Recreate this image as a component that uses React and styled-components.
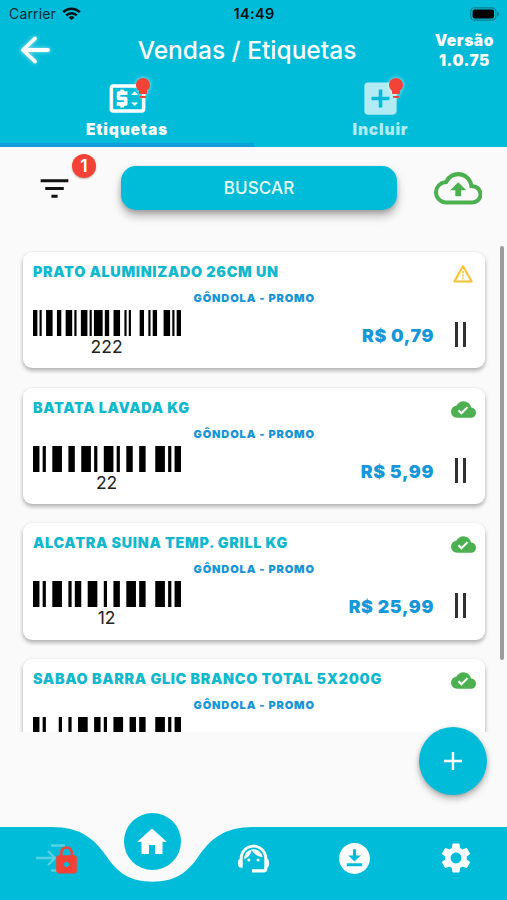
import React from "react";
import styled, { createGlobalStyle } from "styled-components";
import {
  MdOutlinePriceChange,
  MdLightbulb,
  MdAddBox,
  MdFilterList,
  MdOutlineBackup,
  MdCloudDone,
  MdHome,
  MdLock,
  MdSupportAgent,
  MdDownloadForOffline,
  MdSettings,
} from "react-icons/md";

const cyan = "#00bcd9";
const blue = "#1698d8";
const red = "#f44336";
const green = "#4caf50";

const GlobalStyle = createGlobalStyle`
  * { box-sizing: border-box; }
  body { margin: 0; background: #fafafa; font-family: Inter, "Liberation Sans", sans-serif; }
  svg { display: block; flex: none; }
  button { border: 0; padding: 0; background: none; font: inherit; color: inherit; }
`;

const Screen = styled.div`
  width: 507px;
  height: 900px;
  display: flex;
  flex-direction: column;
  position: relative;
  overflow: hidden;
  background: #fafafa;
`;

const Header = styled.header`
  height: 146.5px;
  flex: none;
  background: ${cyan};
  display: flex;
  flex-direction: column;
`;

const StatusBar = styled.div`
  height: 27px;
  padding: 0 7px 0 9px;
  display: grid;
  grid-template-columns: 1fr auto 1fr;
  align-items: center;
  color: #062a33;
  font-size: 14px;
  letter-spacing: 0.15px;
`;

const Carrier = styled.div`
  display: flex;
  align-items: center;
  gap: 6px;
`;

const Clock = styled.div`
  color: #001014;
  font-weight: 600;
  font-size: 14.5px;
  letter-spacing: 0.35px;
  margin-right: 1px;
`;

const BatterySlot = styled.div`
  display: flex;
  justify-content: flex-end;
`;

const TitleBar = styled.div`
  height: 46px;
  display: grid;
  grid-template-columns: 85px 1fr 85px;
  align-items: center;
`;

const BackButton = styled.button`
  padding-left: 18px;
  svg { filter: drop-shadow(0 0 2px rgba(255, 255, 255, 0.6)); }
`;

const Title = styled.h1`
  margin: 0 0 0 -13px;
  text-align: center;
  color: #fff;
  font-size: 24.5px;
  font-weight: 450;
  letter-spacing: 0;
  white-space: nowrap;
`;

const Version = styled.div`
  color: #fff;
  font-size: 15.5px;
  line-height: 19.5px;
  font-weight: 900;
  text-align: center;
  letter-spacing: 0.6px;
  padding-top: 1.5px;
`;

const Tabs = styled.nav`
  flex: 1;
  display: grid;
  grid-template-columns: 254px 253px;
`;

const Tab = styled.button`
  display: flex;
  flex-direction: column;
  align-items: center;
  padding-top: 3px;
  color: ${(p) => (p.$active ? "#fff" : "#b2ebf3")};
  border-bottom: 4px solid ${(p) => (p.$active ? "#0f9fda" : cyan)};
`;

const TabIcon = styled.span`
  position: relative;
  height: 44px;
  display: flex;
  align-items: center;
`;

const TabLabel = styled.span`
  font-size: 15.5px;
  line-height: 19px;
  font-weight: 900;
  letter-spacing: 0.85px;
`;

const Alert = styled.span`
  position: absolute;
  left: ${(p) => p.$x}px;
  top: 0;
  color: ${red};
  filter: drop-shadow(0 0 2px rgba(255, 255, 255, 0.7));
`;

const Toolbar = styled.div`
  height: 99.5px;
  flex: none;
  padding: 19.5px 23px 0 35px;
  display: flex;
  align-items: flex-start;
`;

const FilterButton = styled.button`
  position: relative;
  width: 86px;
  height: 44px;
  display: flex;
  align-items: center;
  padding-left: 1px;
  color: #111;
`;

const Count = styled.span`
  position: absolute;
  left: 37px;
  top: -12px;
  width: 24px;
  height: 24px;
  border-radius: 50%;
  background: ${red};
  color: #fff;
  font-size: 17.5px;
  line-height: 24px;
  font-weight: 600;
  text-align: center;
  box-shadow: 0 1px 2px rgba(0, 0, 0, 0.25);
`;

const SearchButton = styled.button`
  width: 276px;
  height: 44px;
  border-radius: 15px;
  background: ${cyan};
  color: #e8fbfd;
  font-size: 17px;
  font-weight: 500;
  letter-spacing: 0.1px;
  box-shadow: 0 6px 10px rgba(0, 0, 0, 0.28), 0 2px 4px rgba(0, 0, 0, 0.16);
`;

const UploadButton = styled.button`
  height: 44px;
  margin-left: 36.6px;
  display: flex;
  align-items: center;
  color: ${green};
`;

const ListArea = styled.main`
  height: 485.5px;
  flex: none;
  overflow: hidden;
  display: flex;
  justify-content: space-between;
  padding: 0 3.5px 0 23px;
`;

const List = styled.div`
  width: 462px;
  padding-top: 6px;
  display: flex;
  flex-direction: column;
  gap: 19.2px;
`;

const ScrollThumb = styled.div`
  width: 4px;
  height: 414px;
  border-radius: 2px;
  background: #9c9c9c;
`;

const Card = styled.article`
  height: 116.4px;
  flex: none;
  padding: 11px 9px 0 10px;
  border-radius: 9px;
  background: #fff;
  box-shadow: 0 3px 4px rgba(0, 0, 0, 0.24), 0 1px 4px rgba(0, 0, 0, 0.1);
`;

const CardTop = styled.div`
  display: flex;
  justify-content: space-between;
  height: 23px;
`;

const Name = styled.h2`
  margin: 0;
  color: #10b8cd;
  font-size: 14.3px;
  line-height: 18px;
  font-weight: 900;
  letter-spacing: 0.71px;
  white-space: nowrap;
`;

const Status = styled.span`
  width: 26px;
  display: flex;
  justify-content: center;
  padding-top: ${(p) => (p.$warning ? 2 : 0)}px;
  margin-top: ${(p) => (p.$warning ? 0 : -2)}px;
  color: ${green};
`;

const Kind = styled.div`
  height: 24px;
  padding-left: 160.5px;
  color: #1694d6;
  font-size: 11px;
  line-height: 25px;
  font-weight: 900;
  letter-spacing: 0.86px;
`;

const CardBottom = styled.div`
  display: flex;
  align-items: flex-start;
`;

const Code = styled.div`
  width: 148px;
  margin-left: -0.4px;
  color: #222;
  font-size: 17.5px;
  line-height: 22px;
  text-align: center;
`;

const Price = styled.div`
  flex: 1;
  padding: 15px 21px 0 0;
  text-align: right;
  color: ${blue};
  font-size: 17.8px;
  line-height: 22px;
  font-weight: 900;
  letter-spacing: 0.6px;
`;

const Grip = styled.div`
  width: 11px;
  height: 25px;
  margin: 12px 10px 0 0;
  background: linear-gradient(90deg, #303030 2.6px, transparent 2.6px 8.2px, #303030 8.2px);
`;

const AddButton = styled.button`
  position: absolute;
  left: 419px;
  top: 727px;
  width: 68px;
  height: 68px;
  border-radius: 50%;
  background: ${cyan};
  display: grid;
  place-items: center;
  box-shadow: 0 4px 7px rgba(0, 0, 0, 0.25), 0 1px 4px rgba(0, 0, 0, 0.16);
`;

const BottomNav = styled.nav`
  position: relative;
  height: 73px;
  margin-top: auto;
  display: grid;
  grid-template-columns: repeat(5, 1fr);
  color: #fff;
`;

const NavShape = styled.svg`
  position: absolute;
  inset: 0;
`;

const NavItem = styled.button`
  position: relative;
  height: 62px;
  display: grid;
  place-items: center;
`;

const HomeButton = styled.button`
  justify-self: center;
  position: relative;
  top: -14px;
  width: 57px;
  height: 57px;
  border-radius: 50%;
  background: ${cyan};
  display: grid;
  place-items: center;
`;

const LockBadge = styled.span`
  position: absolute;
  left: 51px;
  top: 17.5px;
  color: ${red};
`;

/* Code 128 symbols: alternating bar and gap widths, in modules */
const STOP = "2331112";
const products = [
  { name: "PRATO ALUMINIZADO 26CM UN", code: "222", price: "R$ 0,79", warning: true,
    bars: "211232" + "223112" + "311141" + "223211" + "142211" + STOP },
  { name: "BATATA LAVADA KG", code: "22", price: "R$ 5,99",
    bars: "211232" + "223112" + "311222" + STOP },
  { name: "ALCATRA SUINA TEMP. GRILL KG", code: "12", price: "R$ 25,99",
    bars: "211232" + "112232" + "122231" + STOP },
  { name: "SABAO BARRA GLIC BRANCO TOTAL 5X200G",
    bars: "211412" + "123221" + "123221" + STOP },
];

function Barcode({ bars }) {
  const widths = [...bars].map(Number);
  const total = widths.reduce((a, b) => a + b, 0);
  let x = 0;
  return (
    <svg width="148" height="26" viewBox={`0 0 ${total} 26`} preserveAspectRatio="none">
      {widths.map((w, i) => {
        const start = x;
        x += w;
        return i % 2 === 0 ? <rect key={i} x={start} width={w} height="26" fill="#000" /> : null;
      })}
    </svg>
  );
}

function WarningIcon() {
  return (
    <svg width="20" height="18" viewBox="0 0 20 18" fill="none" stroke="#fbc02d" strokeWidth="2" strokeLinejoin="round">
      <path d="M10 1.3 18.7 16.6H1.3Z" />
      <path d="M10 6v2.6M10 9.6v1.8M10 12.6v1.7" strokeWidth="1.5" />
    </svg>
  );
}

function ProductCard({ item }) {
  return (
    <Card>
      <CardTop>
        <Name>{item.name}</Name>
        <Status $warning={item.warning}>{item.warning ? <WarningIcon /> : <MdCloudDone size={25} />}</Status>
      </CardTop>
      <Kind>GÔNDOLA - PROMO</Kind>
      <CardBottom>
        <Code>
          <Barcode bars={item.bars} />
          {item.code}
        </Code>
        {item.price && (
          <>
            <Price>{item.price}</Price>
            <Grip />
          </>
        )}
      </CardBottom>
    </Card>
  );
}

export default function App() {
  return (
    <>
      <GlobalStyle />
      <Screen>
        <Header>
          <StatusBar>
            <Carrier>
              Carrier
              <svg width="19" height="14" viewBox="0 0 19 14" fill="none" stroke="#001014" strokeWidth="2.5">
                <path d="M1.2 5.2a11.7 11.7 0 0 1 16.6 0M4.2 8.4a7.5 7.5 0 0 1 10.6 0" />
                <path d="M9.5 13.2 6.6 10.4a4.1 4.1 0 0 1 5.8 0Z" fill="#001014" stroke="none" />
              </svg>
            </Carrier>
            <Clock>14:49</Clock>
            <BatterySlot>
              <svg width="30" height="14" viewBox="0 0 30 14">
                <rect x="0.8" y="0.8" width="25" height="12.4" rx="3.6" fill="none" stroke="#087f92" strokeWidth="1.2" />
                <rect x="2.6" y="2.6" width="21.4" height="8.8" rx="1.8" fill="#000" />
                <path d="M27.2 4.6q2 .8 2 2.4t-2 2.4Z" fill="#087f92" />
              </svg>
            </BatterySlot>
          </StatusBar>
          <TitleBar>
            <BackButton aria-label="Voltar">
              <svg width="34" height="32" viewBox="0 0 34 32" fill="none" stroke="#fff" strokeWidth="3.8" strokeLinecap="round" strokeLinejoin="round">
                <path d="M30 16H5M17 4.5 5 16l12 11.5" />
              </svg>
            </BackButton>
            <Title>Vendas / Etiquetas</Title>
            <Version>Versão<br />1.0.75</Version>
          </TitleBar>
          <Tabs>
            <Tab $active>
              <TabIcon>
                <MdOutlinePriceChange size={43} />
                <Alert $x={25}><MdLightbulb size={24} /></Alert>
              </TabIcon>
              <TabLabel>Etiquetas</TabLabel>
            </Tab>
            <Tab>
              <TabIcon>
                <MdAddBox size={43} />
                <Alert $x={24.5}><MdLightbulb size={24} /></Alert>
              </TabIcon>
              <TabLabel>Incluir</TabLabel>
            </Tab>
          </Tabs>
        </Header>
        <Toolbar>
          <FilterButton aria-label="Filtrar">
            <MdFilterList size={37} />
            <Count>1</Count>
          </FilterButton>
          <SearchButton>BUSCAR</SearchButton>
          <UploadButton aria-label="Enviar">
            <MdOutlineBackup size={48.5} />
          </UploadButton>
        </Toolbar>
        <ListArea>
          <List>
            {products.map((item) => <ProductCard key={item.name} item={item} />)}
          </List>
          <ScrollThumb />
        </ListArea>
        <AddButton aria-label="Adicionar">
          <svg width="18" height="18" viewBox="0 0 18 18" stroke="#fff" strokeWidth="2.4">
            <path d="M9 0v18M0 9h18" />
          </svg>
        </AddButton>
        <BottomNav>
          <NavShape width="507" height="73" viewBox="0 0 507 73">
            <path d="M0 0H52C80 0 94 11 107 30 118 46 130 54.7 152.5 54.7S187 46 198 30C211 11 225 0 253 0H507V73H0Z" fill={cyan} />
          </NavShape>
          <NavItem aria-label="Sair">
            <svg width="32" height="30" viewBox="0 0 32 30" fill="none" stroke="#55d1e4" strokeWidth="2.4">
              <path d="M1 15h18M13 8l7 7-7 7M16 2.5h14M16 27.5h14" />
            </svg>
            <LockBadge><MdLock size={31} /></LockBadge>
          </NavItem>
          <HomeButton aria-label="Início"><MdHome size={36} /></HomeButton>
          <NavItem aria-label="Suporte"><MdSupportAgent size={37} /></NavItem>
          <NavItem aria-label="Baixar"><MdDownloadForOffline size={37} /></NavItem>
          <NavItem aria-label="Configurações"><MdSettings size={36} /></NavItem>
        </BottomNav>
      </Screen>
    </>
  );
}
